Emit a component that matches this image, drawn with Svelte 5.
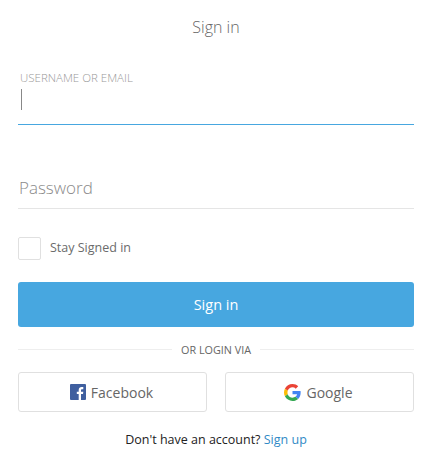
<script>
  let username = $state('');
  let password = $state('');
  let stay = $state(false);
</script>

<div class="page">
  <h1>Sign in</h1>

  <form class="login" onsubmit={(e) => e.preventDefault()}>
    <label class="field active">
      <span class="small-label">USERNAME OR EMAIL</span>
      <span class="input-row">
        <span class="caret"></span>
        <input bind:value={username} aria-label="Username or email" />
      </span>
    </label>

    <label class="field">
      <input class="pass" type="password" placeholder="Password" bind:value={password} />
    </label>

    <label class="stay">
      <input type="checkbox" bind:checked={stay} />
      <span>Stay Signed in</span>
    </label>

    <button class="submit" type="submit">Sign in</button>

    <div class="divider"><span>OR LOGIN VIA</span></div>

    <div class="social">
      <button type="button" class="social-btn">
        <svg width="16" height="16" viewBox="0 0 16 16" aria-hidden="true">
          <rect width="16" height="16" rx="1" fill="#3f5f9f" />
          <path d="M11 16v-6h2l.3-2.300H11V6.300c0-.7.2-1.100 1.100-1.100h1.200V3.100c-.2 0-.9-.1-1.700-.1-1.700 0-2.900 1-2.900 3v1.700H6.800V10h1.900v6z" fill="#fff" />
        </svg>
        Facebook
      </button>
      <button type="button" class="social-btn">
        <svg width="17" height="17" viewBox="0 0 48 48" aria-hidden="true">
          <path fill="#EA4335" d="M24 9.500c3.500 0 6.700 1.200 9.200 3.600l6.900-6.900C35.900 2.400 30.500 0 24 0 14.600 0 6.500 5.400 2.600 13.200l8 6.200C12.500 13.700 17.800 9.500 24 9.500z" />
          <path fill="#4285F4" d="M47 24.500c0-1.600-.1-3.100-.4-4.500H24v9h12.900c-.6 3-2.200 5.500-4.700 7.200l7.700 6C44.400 38 47 31.800 47 24.500z" />
          <path fill="#FBBC05" d="M10.600 28.600c-.5-1.400-.8-3-.8-4.600s.3-3.200.8-4.600l-8-6.200C.9 16.500 0 20.100 0 24s.9 7.500 2.600 10.800z" />
          <path fill="#34A853" d="M24 48c6.500 0 11.900-2.100 15.900-5.800l-7.700-6c-2.200 1.400-4.900 2.300-8.200 2.300-6.200 0-11.500-4.200-13.400-9.900l-8 6.200C6.500 42.600 14.600 48 24 48z" />
        </svg>
        Google
      </button>
    </div>

    <p class="signup">Don't have an account? <a href="#signup">Sign up</a></p>
  </form>
</div>

<style>
  :global(body) {
    margin: 0;
    background: #fff;
  }

  .page {
    box-sizing: border-box;
    width: 433px;
    height: 471px;
    padding: 0 19px 0 18px;
    font-family: "Open Sans", sans-serif;
    overflow: hidden;
  }

  h1 {
    margin: 0;
    padding-top: 16px;
    font-size: 16px;
    line-height: 22px;
    font-weight: 300;
    color: #666;
    text-align: center;
  }

  .login {
    display: flex;
    flex-direction: column;
  }

  .field {
    display: block;
    border-bottom: 1px solid #e5e5e5;
  }

  .field.active {
    margin-top: 32px;
    border-bottom: 1px solid #47a7e0;
    height: 54px;
  }

  .small-label {
    display: block;
    font-size: 11.5px;
    line-height: 16px;
    font-weight: 300;
    color: #999;
    padding-left: 2px;
  }

  .input-row {
    display: block;
    position: relative;
    padding-top: 3px;
  }

  .caret {
    position: absolute;
    left: 3px;
    top: 3px;
    width: 1px;
    height: 21px;
    background: #888;
  }

  input:not([type="checkbox"]) {
    display: block;
    width: 100%;
    box-sizing: border-box;
    border: 0;
    outline: 0;
    padding: 0;
    background: transparent;
    font: inherit;
    color: #333;
  }

  .pass {
    height: 39px;
    margin-top: 44px;
    padding-left: 1px !important;
    padding-bottom: 3px !important;
    font-size: 17px !important;
    font-weight: 300 !important;
  }

  .pass::placeholder {
    color: #8a8a8a;
    opacity: 1;
  }

  .stay {
    display: flex;
    align-items: center;
    gap: 9px;
    margin-top: 28px;
    height: 23px;
    font-size: 12.5px;
    color: #6b6b6b;
  }

  .stay span {
    padding-bottom: 2px;
  }

  .stay input {
    appearance: none;
    box-sizing: border-box;
    width: 23px;
    height: 23px;
    margin: 0;
    background: #fff;
    border: 1px solid #e0e0e0;
    border-radius: 2px;
  }

  .stay input:checked {
    background: #47a7e0;
  }

  .submit {
    margin-top: 22px;
    height: 45px;
    border: 0;
    border-radius: 3px;
    background: #47a7e0;
    color: #fff;
    font: inherit;
    font-size: 14.5px;
    cursor: pointer;
  }

  .divider {
    display: flex;
    align-items: center;
    gap: 9px;
    margin-top: 13px;
    height: 18px;
    font-size: 10.8px;
    color: #666;
  }

  .divider::before,
  .divider::after {
    content: "";
    flex: 1;
    height: 1px;
    background: #eee;
  }

  .social {
    display: grid;
    grid-template-columns: 1fr 1fr;
    gap: 18px;
    margin-top: 14px;
  }

  .social-btn {
    display: flex;
    align-items: center;
    justify-content: center;
    gap: 5px;
    height: 40px;
    padding: 0 2px 0 0;
    background: #fff;
    border: 1px solid #e0e0e0;
    border-radius: 3px;
    color: #666;
    font: inherit;
    font-size: 14px;
    cursor: pointer;
  }

  .signup {
    margin: 19px 0 0;
    font-size: 12.5px;
    line-height: 18px;
    color: #222;
    text-align: center;
  }

  .signup a {
    color: #2f8ac6;
    text-decoration: none;
  }
</style>
